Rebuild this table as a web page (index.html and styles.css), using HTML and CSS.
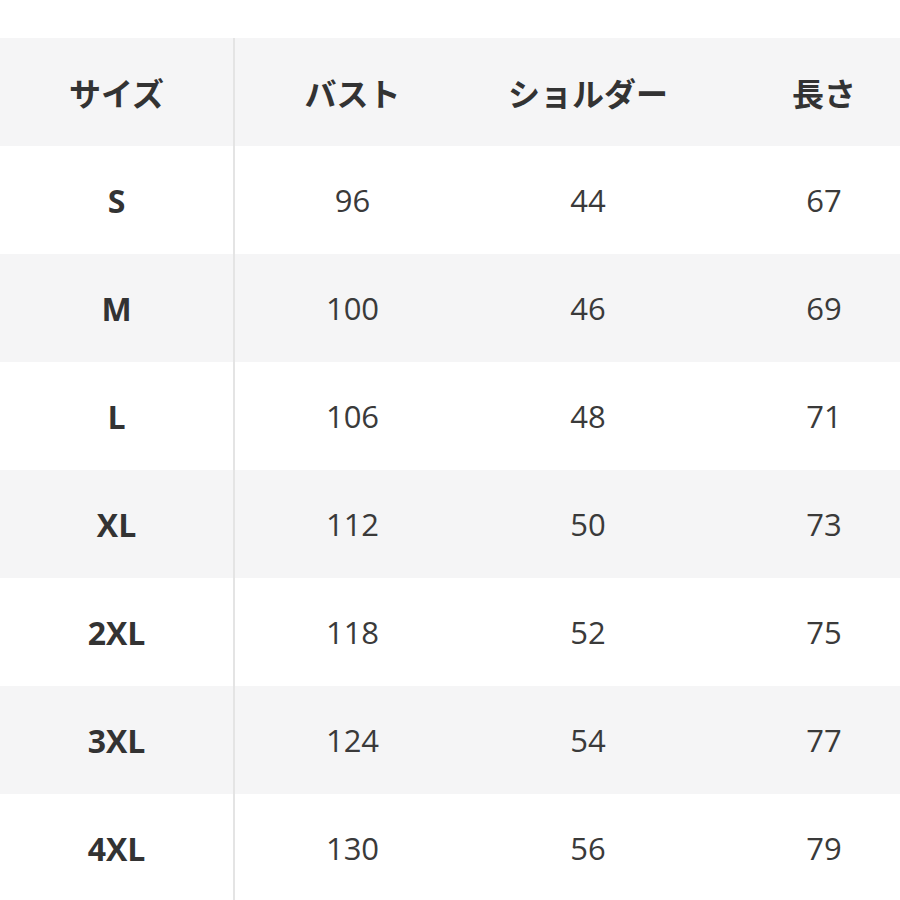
FILE: index.html
```html
<!DOCTYPE html>
<html lang="ja">
<head>
<meta charset="utf-8">
<title>サイズ表</title>
<link rel="stylesheet" href="styles.css">
</head>
<body>
<div class="wrap">
<table class="size-table">
  <colgroup>
    <col class="c1"><col class="c2"><col class="c3"><col class="c4">
  </colgroup>
  <thead>
    <tr><th>サイズ</th><th>バスト</th><th>ショルダー</th><th>長さ</th></tr>
  </thead>
  <tbody>
    <tr><th>S</th><td>96</td><td>44</td><td>67</td></tr>
    <tr><th>M</th><td>100</td><td>46</td><td>69</td></tr>
    <tr><th>L</th><td>106</td><td>48</td><td>71</td></tr>
    <tr><th>XL</th><td>112</td><td>50</td><td>73</td></tr>
    <tr><th>2XL</th><td>118</td><td>52</td><td>75</td></tr>
    <tr><th>3XL</th><td>124</td><td>54</td><td>77</td></tr>
    <tr><th>4XL</th><td>130</td><td>56</td><td>79</td></tr>
  </tbody>
</table>
</div>
</body>
</html>
```
FILE: styles.css
```css
html, body {
  margin: 0;
  padding: 0;
  background: #ffffff;
  overflow: hidden;
}
.wrap {
  padding-top: 38px;
  width: 900px;
  overflow: hidden;
}
.size-table {
  border-collapse: collapse;
  table-layout: fixed;
  width: 942px;
  font-family: "Open Sans", "Noto Sans CJK JP", sans-serif;
  font-size: 31px;
  color: #3a3a3a;
}
.c1 { width: 234px; }
.c2, .c3, .c4 { width: 236px; }
.size-table th,
.size-table td {
  height: 108px;
  padding: 0;
  text-align: center;
  vertical-align: middle;
}
.size-table th {
  font-weight: 700;
  font-size: 32px;
  color: #333333;
}
.size-table thead th {
  font-family: "Noto Sans CJK JP", sans-serif;
}
.size-table td { font-weight: 400; }
.size-table tr > :first-child {
  border-right: 2px solid #e4e4e4;
}
.size-table thead tr,
.size-table tbody tr:nth-child(even) {
  background: #f5f5f6;
}
```
